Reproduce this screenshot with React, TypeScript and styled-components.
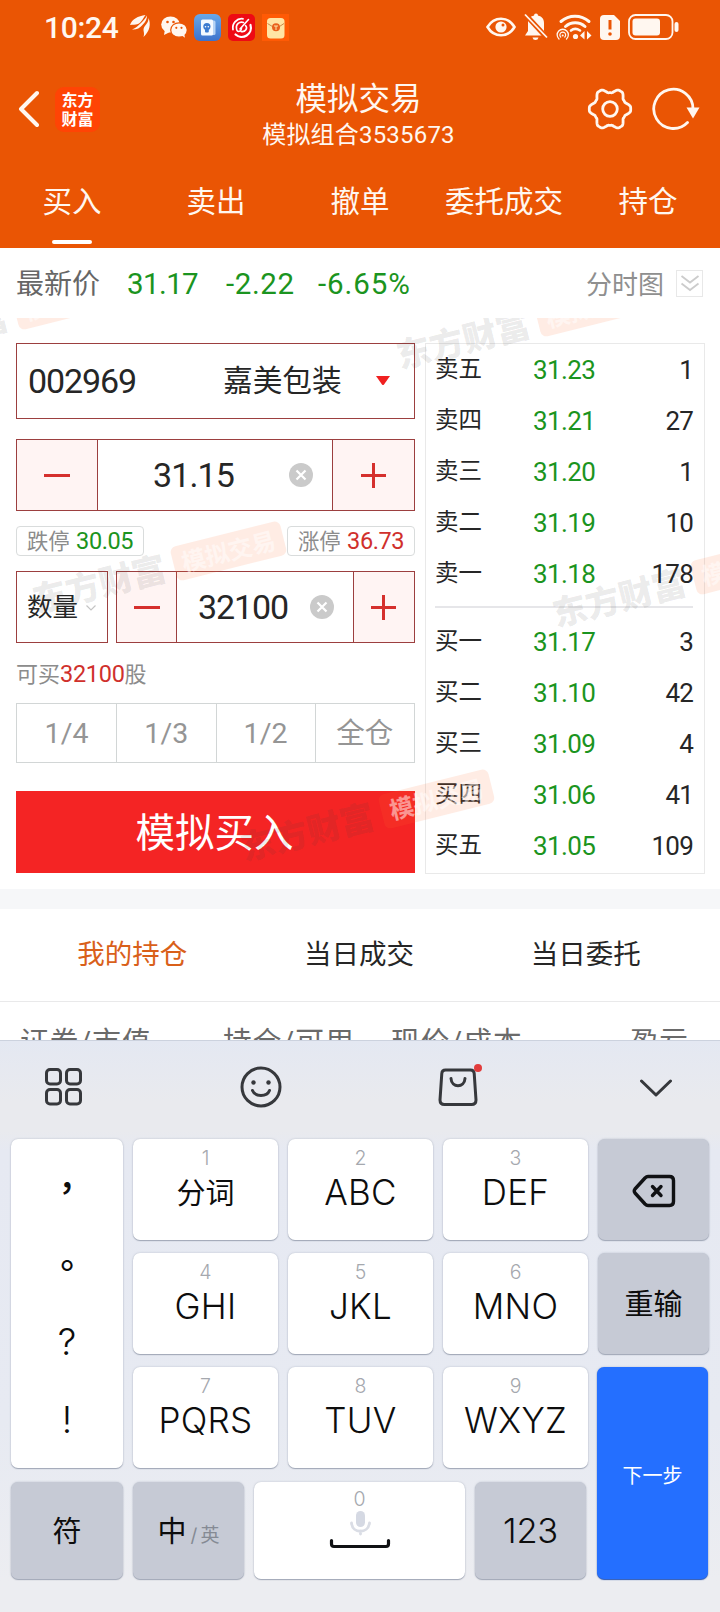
import React from "react";
import styled, { createGlobalStyle } from "styled-components";

const GlobalStyle = createGlobalStyle`
  * { box-sizing: border-box; }
  body {
    margin: 0;
    background: #fff;
    font-family: Roboto, "Noto Sans CJK SC", sans-serif;
    line-height: 1;
    color: #262626;
  }
`;

const GREEN = "#1b9420";
const RED = "#d0302c";
const LINE = "#9c3f3f";

const Screen = styled.div`
  width: 720px;
  height: 1612px;
  overflow: hidden;
  display: flex;
  flex-direction: column;
`;

/* ---------- header ---------- */

const Header = styled.header`
  flex: none;
  height: 248px;
  background: #ea5504;
  color: #fff7f0;
  display: flex;
  flex-direction: column;
`;

const StatusBar = styled.div`
  height: 54px;
  padding: 0 41px 0 44px;
  display: flex;
  align-items: center;
  justify-content: space-between;
`;

const StatusGroup = styled.div<{ $gap: number }>`
  display: flex;
  align-items: center;
  gap: ${(p) => p.$gap}px;
`;

const Clock = styled.span`
  font-size: 30px;
  font-weight: 500;
  letter-spacing: -0.3px;
  width: 78px;
  margin-right: 1px;
  padding-top: 2px;
  white-space: nowrap;
`;

const NavBar = styled.div`
  height: 106px;
  padding: 0 20px 0 17px;
  display: grid;
  grid-template-columns: 150px 1fr 150px;
`;

const NavSide = styled.div<{ $end?: boolean }>`
  display: flex;
  align-items: center;
  height: 110px;
  gap: ${(p) => (p.$end ? 19 : 16)}px;
  justify-content: ${(p) => (p.$end ? "flex-end" : "flex-start")};
`;

const BrandLogo = styled.div`
  width: 45px;
  height: 45px;
  border-radius: 9px;
  background: #ff4405;
  display: grid;
  place-content: center;
  font-family: "Noto Sans CJK SC", sans-serif;
  font-size: 16px;
  font-weight: 700;
  line-height: 19.5px;
  color: #fff;
`;

const TitleBlock = styled.div`
  display: flex;
  flex-direction: column;
  align-items: center;
  padding-top: 29.5px;
`;

const Title = styled.h1`
  margin: 0;
  font-size: 31.5px;
  font-weight: 400;
`;

const Subtitle = styled.div`
  margin-top: 8px;
  font-size: 24px;
  letter-spacing: 0.2px;
`;

const Tabs = styled.nav`
  height: 88px;
  display: grid;
  grid-template-columns: repeat(5, 1fr);
`;

const Tab = styled.div<{ $active?: boolean }>`
  display: flex;
  flex-direction: column;
  align-items: center;
  padding-top: 28px;
  font-size: 29.5px;
  white-space: nowrap;

  &::after {
    content: "";
    width: 40px;
    height: 4px;
    margin-top: 22.5px;
    border-radius: 2px;
    background: ${(p) => (p.$active ? "#fff" : "transparent")};
  }
`;

/* ---------- quote ---------- */

const QuoteRow = styled.div`
  flex: none;
  height: 70px;
  padding: 3px 17px 0 16px;
  display: flex;
  align-items: center;
`;

const QuoteLabel = styled.span`
  font-size: 28px;
  color: #666;
  width: 111px;
`;

const QuoteValue = styled.span<{ $w: number; $ls: number }>`
  width: ${(p) => p.$w}px;
  font-size: 29.5px;
  letter-spacing: ${(p) => p.$ls}px;
  color: ${GREEN};
  white-space: nowrap;
`;

const ChartToggle = styled.div`
  margin-left: auto;
  display: flex;
  align-items: center;
  gap: 12px;
  font-size: 26px;
  color: #8f8f8f;
`;

const ToggleBox = styled.div`
  width: 27px;
  height: 27px;
  margin-top: -3px;
  border: 1.5px solid #e8e8e8;
  display: grid;
  place-items: center;
`;

/* ---------- trade panel ---------- */

const TradePanel = styled.section`
  position: relative;
  overflow: hidden;
  flex: none;
  height: 571px;
  padding: 25px 15px 0 16px;
  display: flex;
  justify-content: space-between;
`;

const Form = styled.div`
  width: 399px;
  display: flex;
  flex-direction: column;
`;

const StockSelect = styled.div`
  height: 76px;
  border: 1px solid ${LINE};
  padding: 0 24px 0 11px;
  display: flex;
  align-items: center;
  font-size: 34px;
`;

const StockCode = styled.span`
  width: 195px;
  letter-spacing: -1.1px;
`;

const StockName = styled.span`
  font-size: 29.7px;
  flex: 1;
`;

const Stepper = styled.div<{ $side: number; $side2: number }>`
  flex: 1;
  height: 72px;
  border: 1px solid ${LINE};
  display: grid;
  grid-template-columns: ${(p) => p.$side}px 1fr ${(p) => p.$side2}px;
`;

const StepButton = styled.div<{ $edge: "left" | "right" }>`
  background: #fff4f3;
  display: grid;
  place-items: center;
  border-${(p) => p.$edge}: 1px solid ${LINE};
`;

const StepValue = styled.div<{ $pad: number; $ls: number; $right: number }>`
  display: flex;
  align-items: center;
  justify-content: space-between;
  padding: 0 ${(p) => p.$right}px 0 ${(p) => p.$pad}px;
  font-size: 34px;
  letter-spacing: ${(p) => p.$ls}px;
`;

const PriceStep = styled.div`
  display: flex;
  margin-top: 20px;
`;

const Limits = styled.div`
  display: flex;
  justify-content: space-between;
  margin-top: 15px;
`;

const LimitTag = styled.div`
  width: 128px;
  height: 30px;
  border: 1px solid #d9dcdc;
  border-radius: 4px;
  padding: 2px 0 0 10px;
  display: flex;
  align-items: center;
  gap: 6.5px;
  font-size: 21.3px;
  color: #8c8c8c;
  white-space: nowrap;
`;

const LimitPrice = styled.span<{ $color: string }>`
  font-size: 23.5px;
  letter-spacing: -0.4px;
  color: ${(p) => p.$color};
`;

const AmountRow = styled.div`
  display: flex;
  gap: 8px;
  margin-top: 15px;
`;

const AmountMode = styled.div`
  width: 92px;
  height: 72px;
  border: 1px solid ${LINE};
  padding: 1px 11px 0 10px;
  display: flex;
  align-items: center;
  justify-content: space-between;
  font-size: 25.5px;
`;

const Affordable = styled.div`
  margin-top: 20px;
  height: 22px;
  font-size: 22px;
  color: #8c8c8c;

  em {
    font-style: normal;
    font-size: 23.5px;
    letter-spacing: -0.3px;
    color: ${RED};
  }
`;

const Fractions = styled.div`
  margin-top: 18px;
  height: 60px;
  border: 1px solid #d2d6d6;
  display: grid;
  grid-template-columns: repeat(4, 1fr);
`;

const Fraction = styled.div`
  display: grid;
  place-items: center;
  padding-top: 1.5px;
  font-size: 28.5px;
  letter-spacing: 0.2px;
  color: #959595;

  & + & {
    border-left: 1px solid #d2d6d6;
  }
`;

const SubmitButton = styled.div`
  margin-top: 28px;
  height: 82px;
  background: #f42424;
  color: #fff;
  font-size: 39.5px;
  padding: 4px 2px 0 0;
  display: grid;
  place-items: center;
`;

const OrderBook = styled.div`
  width: 280px;
  height: 531px;
  border: 1px solid #e9e9e9;
  padding: 0 11px 0 9px;
`;

const BookRow = styled.div`
  height: 51px;
  display: grid;
  grid-template-columns: 98px 1fr auto;
  align-items: center;
  font-size: 23.5px;
`;

const BookPrice = styled.span`
  font-size: 26px;
  letter-spacing: -0.6px;
  color: ${GREEN};
`;

const BookQty = styled.span`
  font-size: 26px;
  letter-spacing: -0.8px;
`;

const BookDivider = styled.div`
  height: 2px;
  background: #e6e6e9;
  margin: 7px 0 8.5px;
`;

const Watermark = styled.div`
  position: absolute;
  width: 258px;
  height: 40px;
  margin: -20px 0 0 -129px;
  transform: rotate(-14deg);
  display: flex;
  align-items: center;
  justify-content: space-between;
  pointer-events: none;
  font-family: "Noto Sans CJK SC", sans-serif;
  font-weight: 900;
  font-size: 34px;
  color: rgba(60, 60, 60, 0.11);
  white-space: nowrap;
`;

const WatermarkBadge = styled.span`
  flex: none;
  width: 113px;
  height: 35px;
  border-radius: 6px;
  background: rgba(255, 110, 50, 0.13);
  color: rgba(255, 255, 255, 0.5);
  font-size: 24px;
  font-weight: 700;
  display: grid;
  place-items: center;
`;

/* ---------- holdings ---------- */

const Band = styled.div`
  flex: none;
  height: 20px;
  background: #f6f7f9;
`;

const HoldingTabs = styled.div`
  flex: none;
  height: 93px;
  padding: 0 21px 0 19px;
  border-bottom: 1px solid #e9e9ea;
  display: grid;
  grid-template-columns: repeat(3, 1fr);
`;

const HoldingTab = styled.div<{ $active?: boolean }>`
  display: grid;
  place-items: center;
  font-size: 27.5px;
  color: ${(p) => (p.$active ? "#d9601a" : "#262626")};
`;

const TableHead = styled.div`
  flex: none;
  height: 38px;
  overflow: hidden;
  padding: 26px 31px 0 20px;
  display: grid;
  grid-template-columns: 203px 168px 1fr auto;
  font-size: 28.7px;
  letter-spacing: 1px;
  color: #6a6a6a;
  white-space: nowrap;
`;

/* ---------- keyboard ---------- */

const Keyboard = styled.section`
  flex: 1;
  border-top: 1px solid #ccd2de;
  background: linear-gradient(#e4e8f2 0, #e9eaee 60px, #e9eaee 90px, #e6e9f2 110px, #e7eaf2 380px, #ecedf1 540px);
  display: flex;
  flex-direction: column;
`;

const Toolbar = styled.div`
  height: 98px;
  padding: 0 47px 7px 44px;
  display: flex;
  align-items: center;
  justify-content: space-between;
`;

const Keys = styled.div`
  padding-left: 11px;
  display: flex;
  gap: 10px;
`;

const MainKeys = styled.div`
  display: flex;
  flex-direction: column;
  gap: 14px;
`;

const LetterGrid = styled.div`
  display: grid;
  grid-template-columns: 112px repeat(3, 145px);
  grid-template-rows: 101px 101px 101px;
  gap: 13px 10px;
`;

const BottomKeys = styled.div`
  display: grid;
  grid-template-columns: 112px 111px 211px 111px;
  gap: 10px;
  height: 97px;
`;

const SideKeys = styled.div`
  width: 111px;
  display: grid;
  grid-template-rows: 101px 101px 212px;
  gap: 13px;
`;

const Key = styled.div<{ $tone?: "gray" | "blue"; $size?: number }>`
  border-radius: 7px;
  background: ${(p) => (p.$tone === "gray" ? "#c6cad5" : p.$tone === "blue" ? "#246fff" : "#fff")};
  box-shadow: 0 1px 1px ${(p) => (p.$tone === "blue" ? "#2a57b4" : "#a0a7b6")}, 0 0 2px rgba(120, 130, 150, 0.45);
  color: ${(p) => (p.$tone === "blue" ? "#fff" : "#0d0d0d")};
  font-family: Inter, "Noto Sans CJK SC", sans-serif;
  font-size: ${(p) => p.$size ?? 29}px;
  padding-top: ${(p) => (p.$tone === "blue" ? 5 : 2)}px;
  display: flex;
  align-items: center;
  justify-content: center;
`;

const NextKey = styled(Key)`
  margin: 0 1px 0 -1px;
`;

const LetterKey = styled(Key)`
  flex-direction: column;
  justify-content: flex-start;
  padding-top: 10px;
`;

const KeyDigit = styled.span`
  font-size: 19.5px;
  font-weight: 300;
  color: #a5a8ae;
`;

const KeyLabel = styled.span<{ $cjk?: boolean }>`
  margin-top: ${(p) => (p.$cjk ? 10.5 : 6)}px;
  font-size: ${(p) => (p.$cjk ? 29 : 35)}px;
  font-weight: ${(p) => (p.$cjk ? 400 : 300)};
  letter-spacing: ${(p) => (p.$cjk ? 0 : 0.3)}px;
`;

const PunctKey = styled(Key)`
  grid-row: 1 / span 3;
  flex-direction: column;
  justify-content: flex-start;
  padding-top: 7px;
`;

const Punct = styled.span<{ $latin?: boolean }>`
  height: 78px;
  display: grid;
  place-items: center;
  font-family: ${(p) => (p.$latin ? "Inter" : '"Noto Sans CJK TC"')}, sans-serif;
  font-size: ${(p) => (p.$latin ? 37 : 35)}px;
  font-weight: ${(p) => (p.$latin ? 300 : 500)};
`;

const LangAlt = styled.small`
  font-size: 19px;
  color: #858a94;
  align-self: flex-end;
  margin: 0 0 34px 4px;
  word-spacing: -2px;
  white-space: nowrap;
`;

const NumberLabel = styled.span`
  font-size: 34.5px;
  font-weight: 300;
  letter-spacing: -0.3px;
`;

const SpaceKey = styled(Key)`
  flex-direction: column;
  justify-content: flex-start;
  padding-top: 8px;
`;

/* ---------- icons ---------- */

const gearPath = (() => {
  const pts: string[] = [];
  for (let i = 0; i < 120; i++) {
    const a = (i / 120) * Math.PI * 2;
    const wave = Math.max(-1, Math.min(1, 1.35 * Math.cos(6 * a)));
    const r = 18.5 + 2.2 * wave;
    pts.push(`${(23 + r * Math.cos(a)).toFixed(2)} ${(23 + r * Math.sin(a)).toFixed(2)}`);
  }
  return `M${pts.join("L")}Z`;
})();

const GearIcon = () => (
  <svg width="46" height="46" fill="none" stroke="currentColor" strokeWidth="2.8" strokeLinejoin="round">
    <path d={gearPath} />
    <circle cx="23" cy="23" r="7.3" />
  </svg>
);

const RefreshIcon = () => (
  <svg width="48" height="46" viewBox="0 0 48 46" fill="none" stroke="currentColor" strokeWidth="2.8">
    <path d="M35.5 36.5A19.6 19.6 0 1 1 41 23" strokeLinecap="round" />
    <path d="M34.5 21.5H47.5L41 32.5Z" fill="currentColor" stroke="none" />
  </svg>
);

const BackIcon = () => (
  <svg width="22" height="38" fill="none" stroke="currentColor" strokeWidth="4" strokeLinecap="round" strokeLinejoin="round">
    <path d="M20 3L4 19L20 35" />
  </svg>
);

const FeatherIcon = () => (
  <svg width="21" height="24" viewBox="0 0 21 24" fill="currentColor">
    <path d="M0 10C2 4 8 1 15.500 0C13 3 12 7 8 9C5 10 3 9.500 0 10Z" />
    <path d="M17 .5C17 5 14.500 8 12 10.500C10 13 6 15 2 14.500C7 12.500 8 10.500 10.500 8.500C13 6 15 4 17 .5Z" />
    <path d="M18.500 3C21 9 20 16 13.500 22C15 17 12.500 16 14 12.500C15.500 9.500 18.500 8 18.500 3Z" />
  </svg>
);

const WechatIcon = () => (
  <svg width="26" height="22" viewBox="0 0 26 22">
    <ellipse cx="9.5" cy="8.5" rx="9.3" ry="8" fill="currentColor" />
    <path d="M4 13L3 19L9 16Z" fill="currentColor" />
    <ellipse cx="18" cy="14" rx="8.3" ry="7.2" fill="currentColor" stroke="#ea5504" strokeWidth="1.2" />
    <path d="M20 19L24 21.7L23 17Z" fill="currentColor" />
    <g fill="#ea5504">
      <circle cx="6.5" cy="6" r="1.3" />
      <circle cx="12.5" cy="6" r="1.3" />
      <circle cx="15.3" cy="11.8" r="1.1" />
      <circle cx="20.5" cy="11.8" r="1.1" />
    </g>
  </svg>
);

const BookAppIcon = () => (
  <svg width="27" height="27">
    <defs>
      <linearGradient id="book" x2="0" y2="1">
        <stop stopColor="#69a8ea" />
        <stop offset="1" stopColor="#3c72cc" />
      </linearGradient>
    </defs>
    <rect width="27" height="27" rx="6" fill="url(#book)" />
    <rect x="9" y="6.500" width="12.500" height="14.500" rx="1.500" fill="#b6d3f5" />
    <rect x="7" y="5.500" width="12" height="16" rx="1.500" fill="#f4f9ff" />
    <circle cx="12.900" cy="12.500" r="3.600" fill="#3c7bd0" />
    <rect x="11" y="14.500" width="3.800" height="4" rx="1" fill="#3c7bd0" />
    <circle cx="11.500" cy="12.800" r=".8" fill="#fff" />
    <circle cx="14.300" cy="12.800" r=".8" fill="#fff" />
  </svg>
);

const SwirlAppIcon = () => (
  <svg width="27" height="27" fill="none" stroke="#fff" strokeLinecap="round">
    <rect width="27" height="27" rx="5" fill="#ee0a14" stroke="none" />
    <path d="M15 4.800A9 9 0 0 0 5 15.500" strokeWidth="1.800" />
    <path d="M22.500 11A9.200 9.200 0 0 1 7.500 20.500" strokeWidth="2.200" />
    <path d="M15.500 8.500A5.200 5.200 0 0 0 8.500 14.500C8.500 18.500 13 18.500 13.500 14" strokeWidth="1.600" />
    <path d="M20.500 5.500L12 15M17.500 11.500C20 14 17.500 18.500 13 17.500" strokeWidth="1.600" />
  </svg>
);

const EnvelopeAppIcon = () => (
  <svg width="27" height="27">
    <rect width="27" height="27" fill="#ff5a05" />
    <rect x="5" y="4" width="17.500" height="20.500" rx="3.500" fill="#ffe4a4" />
    <path d="M5.500 9.500L12 13.500H16L22 9.500" stroke="#c98a4d" fill="none" />
    <circle cx="14" cy="13.300" r="4" fill="#e9601c" />
    <path d="M12 12H16M14 12V16" stroke="#ffe4a4" />
  </svg>
);

const EyeIcon = () => (
  <svg width="30" height="20" fill="none" stroke="currentColor">
    <path d="M1.500 10C8 -1 22 -1 28.500 10C22 21 8 21 1.500 10Z" strokeWidth="2.600" />
    <circle cx="15" cy="10" r="5.600" fill="currentColor" stroke="none" />
    <circle cx="17" cy="8" r="1.500" fill="#ea5504" stroke="none" />
  </svg>
);

const MutedBellIcon = () => (
  <svg width="24" height="28" viewBox="0 0 24 28">
    <path d="M4 18V10C4 5 7 2.500 12 2.500S20 5 20 10V18L22 22.500H1Z" fill="currentColor" />
    <circle cx="12" cy="2.500" r="2" fill="currentColor" />
    <path d="M8.500 24.500H14.500Q14 27 11.500 27T8.500 24.500Z" fill="currentColor" />
    <path d="M0 0L24 26" stroke="#ea5504" strokeWidth="5" />
    <path d="M1 1.500L23 24.500" stroke="currentColor" strokeWidth="1.800" />
  </svg>
);

const WifiIcon = () => (
  <svg width="36" height="27" viewBox="0 0 36 27" fill="none" stroke="currentColor" strokeLinecap="round">
    <path d="M5 7.500C13 .5 25 .5 33 7.500" strokeWidth="3" />
    <path d="M9.500 12.500C15 7.500 23.500 7.500 29 12.500" strokeWidth="3" />
    <path d="M15 16.500C17.500 14.500 21 14.500 24 16.500" strokeWidth="2.600" />
    <circle cx="19.500" cy="22.500" r="2.600" fill="currentColor" stroke="none" />
    <path d="M3 25A5.600 5.600 0 1 1 10.500 25" strokeWidth="1.300" />
    <path d="M4.700 23A2.900 2.900 0 1 1 8.800 23" strokeWidth="1.200" />
    <circle cx="6.700" cy="21.500" r="1" fill="currentColor" stroke="none" />
    <path d="M28.500 17V25.500L24 21.500ZM31 17V25.500L35.500 21.500Z" fill="currentColor" stroke="none" />
  </svg>
);

const SimAlertIcon = () => (
  <svg width="20" height="25">
    <path d="M4 0H14L20 6V21A4 4 0 0 1 16 25H4A4 4 0 0 1 0 21V4A4 4 0 0 1 4 0Z" fill="currentColor" />
    <path d="M10 5V14.500" stroke="#ea5504" strokeWidth="3" />
    <circle cx="10" cy="19" r="1.800" fill="#ea5504" />
  </svg>
);

const BatteryIcon = () => (
  <svg width="51" height="26">
    <rect x="1" y="1" width="43.500" height="24" rx="6.500" fill="none" stroke="currentColor" strokeWidth="1.800" />
    <rect x="4.500" y="4.500" width="27.500" height="17" rx="3" fill="currentColor" />
    <rect x="46.500" y="8" width="4" height="10" rx="2" fill="currentColor" />
  </svg>
);

const DoubleChevron = () => (
  <svg width="20" height="20" fill="none" stroke="#ccc" strokeWidth="1.800">
    <path d="M1.500 3L10 9.500L18.500 3M1.500 10.500L10 17L18.500 10.500" />
  </svg>
);

const Caret = () => (
  <svg width="14" height="10">
    <path d="M0 0H14L8 8.500Q7 9.500 6 8.500Z" fill="#f02020" />
  </svg>
);

const MinusIcon = () => (
  <svg width="26" height="26" stroke="#d5302d" strokeWidth="3">
    <path d="M0 13.500H26" />
  </svg>
);

const PlusIcon = () => (
  <svg width="26" height="26" stroke="#d5302d" strokeWidth="3">
    <path d="M0 13.500H25M12.500 1V26" />
  </svg>
);

const ClearIcon = () => (
  <svg width="24" height="24">
    <circle cx="12" cy="12" r="12" fill="#cacaca" />
    <path d="M7.500 7.500L16.500 16.500M16.500 7.500L7.500 16.500" stroke="#fff" strokeWidth="2.200" />
  </svg>
);

const SmallChevron = () => (
  <svg width="10" height="6" fill="none" stroke="#c4c4c4" strokeWidth="1.200">
    <path d="M.5 .5L5 5L9.500 .5" />
  </svg>
);

const toolIcon = { fill: "none", stroke: "#36383c", strokeWidth: 3, strokeLinecap: "round", strokeLinejoin: "round" } as const;

const GridIcon = () => (
  <svg width="39" height="40" {...toolIcon}>
    <rect x="2.500" y="2.500" width="14" height="14.500" rx="3.500" />
    <rect x="22.500" y="2.500" width="14" height="14.500" rx="3.500" />
    <rect x="2.500" y="22.500" width="14" height="14.500" rx="3.500" />
    <rect x="22.500" y="22.500" width="14" height="14.500" rx="3.500" />
  </svg>
);

const SmileIcon = () => (
  <svg width="42" height="42" {...toolIcon}>
    <circle cx="21" cy="21" r="19" />
    <path d="M12.500 24.500C15 31 27 31 29.500 24.500" />
    <circle cx="13.500" cy="16.500" r="2.200" fill="#36383c" stroke="none" />
    <circle cx="28.500" cy="16.500" r="2.200" fill="#36383c" stroke="none" />
  </svg>
);

const BagIcon = () => (
  <svg width="44" height="46" {...toolIcon}>
    <path d="M7.500 6H32.500Q36 6 36.200 9.500L38 36Q38 40.500 33.500 40.500H6.500Q2 40.500 2 36L3.800 9.500Q4 6 7.500 6Z" />
    <path d="M13 14.500C13.500 24 26.500 24 27 14.500" />
    <circle cx="40" cy="4" r="4" fill="#e23c3c" stroke="none" />
  </svg>
);

const CollapseIcon = () => (
  <svg width="34" height="20" {...toolIcon}>
    <path d="M2.500 4L17 18L31.500 4" />
  </svg>
);

const BackspaceIcon = () => (
  <svg width="44" height="34" fill="none" stroke="#101114" strokeWidth="3.400" strokeLinecap="round" strokeLinejoin="round">
    <path d="M16 2.500H37.500Q41.500 2.500 41.500 6.500V27.500Q41.500 31.500 37.500 31.500H16Q14.500 31.500 13 30L3 19Q1.500 17 3 15L13 4Q14.500 2.500 16 2.500Z" />
    <path d="M20.500 12.500L29 21.500M29 12.500L20.500 21.500" />
  </svg>
);

const MicSpaceIcon = () => (
  <svg width="62" height="40" fill="none" strokeLinecap="round">
    <rect x="27" y="1" width="9" height="16" rx="4.500" fill="#d5d9e3" />
    <path d="M22.500 13C23.500 24 39 24 40.500 13M31.500 21V24" stroke="#dadde5" strokeWidth="2.800" />
    <path d="M2.500 30.500V34Q2.500 36.500 5 36.500H57Q59.500 36.500 59.500 34V30.500" stroke="#101114" strokeWidth="3.200" />
  </svg>
);

/* ---------- data ---------- */

const sells = [
  ["卖五", "31.23", "1"],
  ["卖四", "31.21", "27"],
  ["卖三", "31.20", "1"],
  ["卖二", "31.19", "10"],
  ["卖一", "31.18", "178"],
];
const buys = [
  ["买一", "31.17", "3"],
  ["买二", "31.10", "42"],
  ["买三", "31.09", "4"],
  ["买四", "31.06", "41"],
  ["买五", "31.05", "109"],
];
const letterKeys = [
  ["1", "分词"],
  ["2", "ABC"],
  ["3", "DEF"],
  ["4", "GHI"],
  ["5", "JKL"],
  ["6", "MNO"],
  ["7", "PQRS"],
  ["8", "TUV"],
  ["9", "WXYZ"],
];
const watermarks = [
  [0, -1],
  [522, 6],
  [158, 250],
  [678, 264],
  [366, 498],
];

const BookRows = ({ rows }: { rows: string[][] }) => (
  <>
    {rows.map(([label, price, qty]) => (
      <BookRow key={label}>
        <span>{label}</span>
        <BookPrice>{price}</BookPrice>
        <BookQty>{qty}</BookQty>
      </BookRow>
    ))}
  </>
);

export default function App() {
  return (
    <Screen>
      <GlobalStyle />
      <Header>
        <StatusBar>
          <StatusGroup $gap={7}>
            <Clock>10:24</Clock>
            <StatusGroup $gap={10}>
              <FeatherIcon />
              <WechatIcon />
            </StatusGroup>
            <StatusGroup $gap={7}>
              <BookAppIcon />
              <SwirlAppIcon />
              <EnvelopeAppIcon />
            </StatusGroup>
          </StatusGroup>
          <StatusGroup $gap={8}>
            <EyeIcon />
            <MutedBellIcon />
            <WifiIcon />
            <SimAlertIcon />
            <BatteryIcon />
          </StatusGroup>
        </StatusBar>
        <NavBar>
          <NavSide>
            <BackIcon />
            <BrandLogo>
              <span>东方</span>
              <span>财富</span>
            </BrandLogo>
          </NavSide>
          <TitleBlock>
            <Title>模拟交易</Title>
            <Subtitle>模拟组合3535673</Subtitle>
          </TitleBlock>
          <NavSide $end>
            <GearIcon />
            <RefreshIcon />
          </NavSide>
        </NavBar>
        <Tabs>
          {["买入", "卖出", "撤单", "委托成交", "持仓"].map((t, i) => (
            <Tab key={t} $active={i === 0}>
              {t}
            </Tab>
          ))}
        </Tabs>
      </Header>

      <QuoteRow>
        <QuoteLabel>最新价</QuoteLabel>
        <QuoteValue $w={99} $ls={-0.6}>31.17</QuoteValue>
        <QuoteValue $w={92} $ls={0.6}>-2.22</QuoteValue>
        <QuoteValue $w={98} $ls={0.9}>-6.65%</QuoteValue>
        <ChartToggle>
          分时图
          <ToggleBox>
            <DoubleChevron />
          </ToggleBox>
        </ChartToggle>
      </QuoteRow>

      <TradePanel>
        <Form>
          <StockSelect>
            <StockCode>002969</StockCode>
            <StockName>嘉美包装</StockName>
            <Caret />
          </StockSelect>
          <PriceStep>
            <Stepper $side={81} $side2={82}>
              <StepButton $edge="right">
                <MinusIcon />
              </StepButton>
              <StepValue $pad={55} $ls={-0.9} $right={19}>
                31.15
                <ClearIcon />
              </StepValue>
              <StepButton $edge="left">
                <PlusIcon />
              </StepButton>
            </Stepper>
          </PriceStep>
          <Limits>
            <LimitTag>
              跌停<LimitPrice $color={GREEN}>30.05</LimitPrice>
            </LimitTag>
            <LimitTag>
              涨停<LimitPrice $color={RED}>36.73</LimitPrice>
            </LimitTag>
          </Limits>
          <AmountRow>
            <AmountMode>
              数量
              <SmallChevron />
            </AmountMode>
            <Stepper $side={60} $side2={61}>
              <StepButton $edge="right">
                <MinusIcon />
              </StepButton>
              <StepValue $pad={21} $ls={-1.1} $right={19}>
                32100
                <ClearIcon />
              </StepValue>
              <StepButton $edge="left">
                <PlusIcon />
              </StepButton>
            </Stepper>
          </AmountRow>
          <Affordable>
            可买<em>32100</em>股
          </Affordable>
          <Fractions>
            {["1/4", "1/3", "1/2", "全仓"].map((f) => (
              <Fraction key={f}>{f}</Fraction>
            ))}
          </Fractions>
          <SubmitButton>模拟买入</SubmitButton>
        </Form>
        <OrderBook>
          <BookRows rows={sells} />
          <BookDivider />
          <BookRows rows={buys} />
        </OrderBook>
        {watermarks.map(([x, y]) => (
          <Watermark key={x} style={{ left: x, top: y }}>
            东方财富<WatermarkBadge>模拟交易</WatermarkBadge>
          </Watermark>
        ))}
      </TradePanel>

      <Band />
      <HoldingTabs>
        <HoldingTab $active>我的持仓</HoldingTab>
        <HoldingTab>当日成交</HoldingTab>
        <HoldingTab>当日委托</HoldingTab>
      </HoldingTabs>
      <TableHead>
        <span>证券/市值</span>
        <span>持仓/可用</span>
        <span>现价/成本</span>
        <span>盈亏</span>
      </TableHead>

      <Keyboard>
        <Toolbar>
          <GridIcon />
          <SmileIcon />
          <BagIcon />
          <CollapseIcon />
        </Toolbar>
        <Keys>
          <MainKeys>
            <LetterGrid>
              <PunctKey>
                <Punct>，</Punct>
                <Punct>。</Punct>
                <Punct $latin>?</Punct>
                <Punct $latin>!</Punct>
              </PunctKey>
              {letterKeys.map(([digit, label]) => (
                <LetterKey key={digit}>
                  <KeyDigit>{digit}</KeyDigit>
                  <KeyLabel $cjk={digit === "1"}>{label}</KeyLabel>
                </LetterKey>
              ))}
            </LetterGrid>
            <BottomKeys>
              <Key $tone="gray">符</Key>
              <Key $tone="gray">
                中<LangAlt>/ 英</LangAlt>
              </Key>
              <SpaceKey>
                <KeyDigit>0</KeyDigit>
                <MicSpaceIcon />
              </SpaceKey>
              <Key $tone="gray">
                <NumberLabel>123</NumberLabel>
              </Key>
            </BottomKeys>
          </MainKeys>
          <SideKeys>
            <Key $tone="gray">
              <BackspaceIcon />
            </Key>
            <Key $tone="gray">重输</Key>
            <NextKey $tone="blue" $size={20}>
              下一步
            </NextKey>
          </SideKeys>
        </Keys>
      </Keyboard>
    </Screen>
  );
}
